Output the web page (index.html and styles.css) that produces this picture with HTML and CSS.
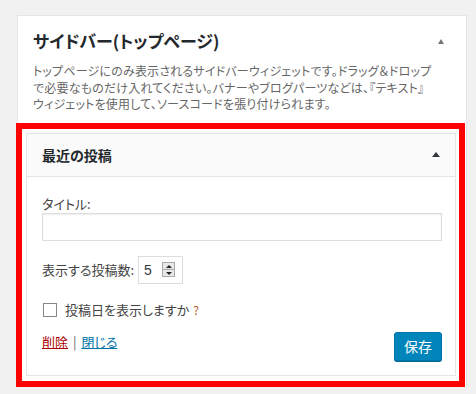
FILE: index.html
```html
<!DOCTYPE html>
<html>
<head>
    <title>ウィジェット</title>
    <link rel="stylesheet" href="styles.css">
</head>
<body>

    <div class="sidebar">
        <div class="sidebar-head">
            <h2>サイドバー(トップページ)</h2>
            <span class="toggle"></span>
        </div>
        <p class="sidebar-desc">トップページにのみ表示されるサイドバーウィジェットです。ドラッグ＆ドロップ<br>で必要なものだけ入れてください。バナーやブログパーツなどは、『テキスト』<br>ウィジェットを使用して、ソースコードを張り付けられます。</p>

        <div class="highlight">
            <div class="widget">
                <div class="widget-top">
                    <h3>最近の投稿</h3>
                    <span class="toggle dark"></span>
                </div>
                <form class="widget-inside">
                    <label class="field-label" for="title">タイトル:</label>
                    <input class="widefat" type="text" id="title" name="title">

                    <div class="number-row">
                        <label for="number">表示する投稿数:</label>
                        <div class="num-box">
                            <span class="num-value">5</span>
                            <span class="spinner">
                                <span class="spin-up"></span>
                                <span class="spin-down"></span>
                            </span>
                        </div>
                    </div>

                    <div class="check-row">
                        <input type="checkbox" id="show_date" name="show_date">
                        <label for="show_date">投稿日を表示しますか</label>
                        <span class="help">?</span>
                    </div>

                    <div class="control-row">
                        <div class="links">
                            <a href="#" class="delete">削除</a>
                            <span class="sep">|</span>
                            <a href="#" class="close">閉じる</a>
                        </div>
                        <button type="submit">保存</button>
                    </div>
                </form>
            </div>
        </div>
    </div>

</body>
</html>
```

FILE: styles.css
```css
body {
    font-family: "Noto Sans CJK JP", "Noto Sans", sans-serif;
    font-feature-settings: "palt";
    background-color: #f1f1f1;
    margin: 0;
    color: #444;
}

.sidebar {
    width: 450px;
    margin: 15px 0 0 17px;
    background-color: #fff;
    border: 1px solid #e5e5e5;
    border-bottom: none;
    box-sizing: border-box;
}

.sidebar-head {
    display: flex;
    justify-content: space-between;
    align-items: center;
    padding: 14px 22px 0 15px;
}

.sidebar-head h2 {
    margin: 0;
    font-size: 17px;
    line-height: 22px;
    font-weight: bold;
    color: #23282d;
}

/* little collapse arrow */
.toggle {
    width: 0;
    height: 0;
    border-left: 3.5px solid transparent;
    border-right: 3.5px solid transparent;
    border-bottom: 5px solid #72777c;
}

.toggle.dark {
    border-bottom-color: #32373c;
    border-left-width: 4px;
    border-right-width: 4px;
}

.sidebar-desc {
    margin: 11px 0 0;
    padding: 0 15px;
    font-size: 12px;
    letter-spacing: 0.2px;
    line-height: 16.5px;
    color: #666;
    white-space: nowrap;
}

.highlight {
    margin: 10px 0 0 -2px;
    width: 449px;
    border: 6px solid #ff0000;
    padding: 4px 3px 5px 4px;
    box-sizing: border-box;
    background-color: #fff;
}

.widget {
    border: 1px solid #e5e5e5;
    background-color: #fff;
}

.widget-top {
    display: flex;
    justify-content: space-between;
    align-items: center;
    height: 42px;
    padding: 0 15px 0 15px;
    background-color: #fafafa;
    border-bottom: 1px solid #e5e5e5;
}

.widget-top h3 {
    margin: 0;
    font-size: 14px;
    font-weight: bold;
    color: #23282d;
}

.widget-inside {
    padding: 18px 13px 14px 15px;
    font-size: 13px;
}

.field-label {
    display: block;
    line-height: 18px;
}

.widefat {
    display: block;
    width: 100%;
    height: 28px;
    margin: 0;
    border: 1px solid #ddd;
    box-sizing: border-box;
    box-shadow: inset 0 1px 2px rgba(0, 0, 0, 0.07);
}

.number-row {
    display: flex;
    align-items: center;
    gap: 4px;
    margin-top: 15px;
}

.num-box {
    display: flex;
    align-items: center;
    justify-content: space-between;
    width: 45px;
    height: 28px;
    padding: 0 7px 0 5px;
    border: 1px solid #ddd;
    box-sizing: border-box;
}

.num-value {
    font-family: "Liberation Sans", sans-serif;
    font-size: 14px;
    color: #32373c;
}

.spinner {
    display: flex;
    flex-direction: column;
    width: 13px;
    height: 15px;
    border: 1px solid #aaa;
    box-sizing: border-box;
    background-color: #e8e8e8;
}

.spin-up, .spin-down {
    flex: 1;
    display: flex;
    justify-content: center;
    align-items: center;
}

.spin-up {
    border-bottom: 1px solid #aaa;
}

.spin-up::after {
    content: "";
    border-left: 3px solid transparent;
    border-right: 3px solid transparent;
    border-bottom: 3px solid #222;
}

.spin-down::after {
    content: "";
    border-left: 3px solid transparent;
    border-right: 3px solid transparent;
    border-top: 3px solid #222;
}

.check-row {
    display: flex;
    align-items: center;
    margin-top: 17px;
    height: 18px;
}

.check-row input {
    -webkit-appearance: none;
    appearance: none;
    width: 14px;
    height: 14px;
    margin: 0 8px 0 1px;
    border: 1px solid #888;
    background-color: #fff;
}

.help {
    margin-left: 4px;
    font-size: 12px;
    color: #c0582b;
}

.control-row {
    display: flex;
    justify-content: space-between;
    align-items: flex-start;
    margin-top: 13px;
}

.links {
    padding-top: 1px;
    line-height: 18px;
}

.links a {
    text-decoration: underline;
}

.delete {
    color: #a00;
}

.close {
    color: #0073aa;
}

.sep {
    color: #666;
    margin: 0 2px;
}

button {
    width: 48px;
    height: 29px;
    padding: 0;
    background-color: #0085ba;
    color: #fff;
    border: 1px solid #0073aa;
    border-radius: 3px;
    box-shadow: 0 1px 0 #006799;
    font-family: inherit;
    font-size: 14px;
    cursor: pointer;
}

button:hover {
    background-color: #008ec2;
}
```
